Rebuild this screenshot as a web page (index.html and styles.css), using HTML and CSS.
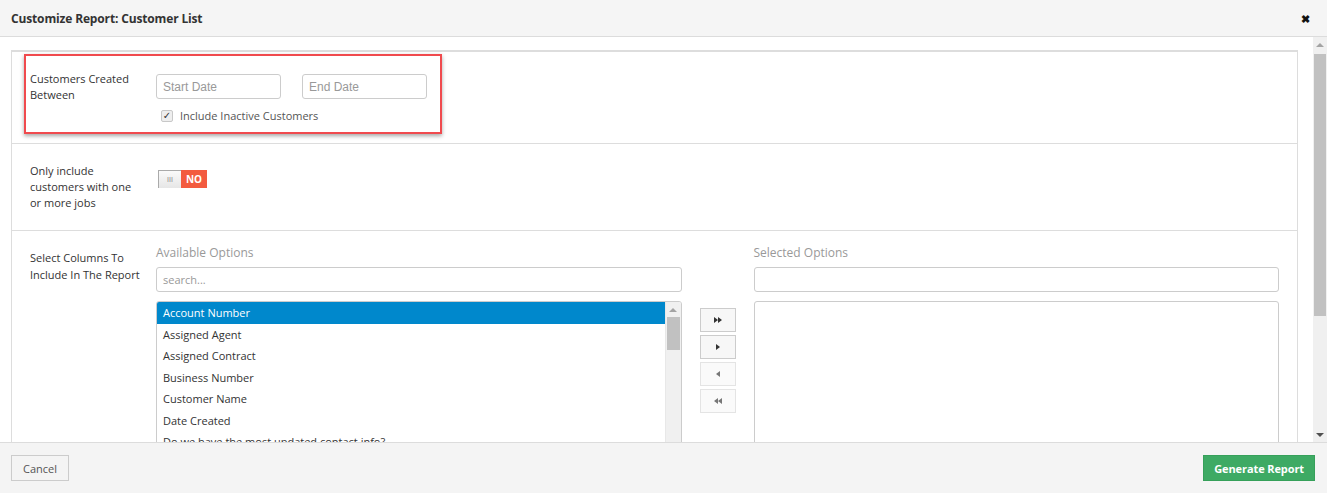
FILE: index.html
```html
<!DOCTYPE html>
<html lang="en">
<head>
    <meta charset="UTF-8">
    <meta name="viewport" content="width=device-width, initial-scale=1.0">
    <title>Customize Report</title>
    <link rel="stylesheet" href="styles.css">
</head>
<body>
<div class="modal">
    <div class="modal-header">
        <span class="modal-title">Customize Report: Customer List</span>
        <span class="close-btn">&#10006;</span>
    </div>

    <div class="modal-body">
        <div class="body-content">
            <div class="panel">
                <div class="highlight-box"></div>

                <div class="row row-dates">
                    <div class="row-label">Customers Created Between</div>
                    <div class="row-fields">
                        <div class="date-inputs">
                            <input type="text" class="date-input" placeholder="Start Date">
                            <input type="text" class="date-input" placeholder="End Date">
                        </div>
                        <label class="check-row">
                            <span class="fake-check">&#10003;</span>
                            Include Inactive Customers
                        </label>
                    </div>
                </div>

                <div class="row row-jobs">
                    <div class="row-label">Only include customers with one or more jobs</div>
                    <div class="row-fields">
                        <div class="toggle">
                            <span class="toggle-handle">III</span>
                            <span class="toggle-no">NO</span>
                        </div>
                    </div>
                </div>

                <div class="row row-columns">
                    <div class="row-label label-columns">Select Columns To Include In The Report</div>
                    <div class="picker">
                        <div class="picker-col">
                            <div class="picker-title">Available Options</div>
                            <input type="text" class="picker-search" placeholder="search...">
                            <div class="listbox">
                                <div class="list-items">
                                    <div class="list-item is-selected">Account Number</div>
                                    <div class="list-item">Assigned Agent</div>
                                    <div class="list-item">Assigned Contract</div>
                                    <div class="list-item">Business Number</div>
                                    <div class="list-item">Customer Name</div>
                                    <div class="list-item">Date Created</div>
                                    <div class="list-item">Do we have the most updated contact info?</div>
                                    <div class="list-item">Email</div>
                                    <div class="list-item">Fax Number</div>
                                    <div class="list-item">First Name</div>
                                    <div class="list-item">Last Name</div>
                                    <div class="list-item">Mobile Number</div>
                                </div>
                                <div class="scrollbar list-scrollbar">
                                    <div class="scroll-arrow arrow-up"></div>
                                    <div class="scroll-track">
                                        <div class="scroll-thumb list-thumb"></div>
                                    </div>
                                    <div class="scroll-arrow arrow-down"></div>
                                </div>
                            </div>
                        </div>

                        <div class="move-buttons">
                            <button class="move-btn">
                                <svg width="8" height="6" viewBox="0 0 8 6"><path d="M0 0 L4 3 L0 6 Z M4 0 L8 3 L4 6 Z" fill="#333"/></svg>
                            </button>
                            <button class="move-btn">
                                <svg width="4" height="6" viewBox="0 0 4 6"><path d="M0 0 L4 3 L0 6 Z" fill="#333"/></svg>
                            </button>
                            <button class="move-btn is-disabled">
                                <svg width="4" height="6" viewBox="0 0 4 6"><path d="M4 0 L0 3 L4 6 Z" fill="#777"/></svg>
                            </button>
                            <button class="move-btn is-disabled">
                                <svg width="8" height="6" viewBox="0 0 8 6"><path d="M4 0 L0 3 L4 6 Z M8 0 L4 3 L8 6 Z" fill="#777"/></svg>
                            </button>
                        </div>

                        <div class="picker-col">
                            <div class="picker-title">Selected Options</div>
                            <input type="text" class="picker-search">
                            <div class="listbox"></div>
                        </div>
                    </div>
                </div>
            </div>
        </div>

        <div class="scrollbar body-scrollbar">
            <div class="scroll-arrow arrow-up"></div>
            <div class="scroll-track">
                <div class="scroll-thumb body-thumb"></div>
            </div>
            <div class="scroll-arrow arrow-down"></div>
        </div>
    </div>

    <div class="modal-footer">
        <button class="btn-cancel">Cancel</button>
        <button class="btn-generate">Generate Report</button>
    </div>
</div>
</body>
</html>
```

FILE: styles.css
```css
*{
    box-sizing: border-box;
}

body{
    margin: 0;
    font-family: "Open Sans", Arial, sans-serif;
    font-size: 11px;
    color: #333;
    background-color: white;
}

.modal{
    display: flex;
    flex-direction: column;
    height: 493px;
}

.modal-header{
    height: 37px;
    display: flex;
    align-items: center;
    justify-content: space-between;
    padding: 0 17px 0 11px;
    background-color: #f5f5f5;
    border-bottom: 1px solid #dcdcdc;
}

.modal-title{
    font-weight: bold;
    font-size: 12px;
    letter-spacing: -0.15px;
    color: #333;
}

.close-btn{
    font-size: 11px;
    font-weight: bold;
    color: #111;
}

.modal-body{
    flex: 1;
    display: flex;
    overflow: hidden;
}

.body-content{
    flex: 1;
    overflow: hidden;
    padding: 13px 15px 0 11px;
}

/* hand-drawn scrollbars */
.scrollbar{
    display: flex;
    flex-direction: column;
    background-color: #f0f0f0;
}

.body-scrollbar{
    width: 14px;
}

.list-scrollbar{
    width: 16px;
    border-left: 1px solid #e8e8e8;
}

.scroll-arrow{
    height: 15px;
    display: flex;
    align-items: center;
    justify-content: center;
}

.arrow-up::before{
    content: "";
    border-left: 4px solid transparent;
    border-right: 4px solid transparent;
    border-bottom: 4px solid #a3a3a3;
}

.arrow-down::before{
    content: "";
    border-left: 4px solid transparent;
    border-right: 4px solid transparent;
    border-top: 4px solid #505050;
}

.scroll-track{
    flex: 1;
    padding: 0 1px;
}

.scroll-thumb{
    background-color: #c1c1c1;
}

.body-thumb{
    height: 262px;
    margin-top: 2px;
}

.list-thumb{
    height: 33px;
}

.panel{
    position: relative;
    border: 1px solid #dddddd;
    border-top: 2px solid #dddddd;
}

.highlight-box{
    position: absolute;
    left: 12px;
    top: 2px;
    width: 418px;
    height: 80px;
    border: 2px solid #f04a4e;
    box-shadow: 0 2px 4px rgba(0, 0, 0, 0.35);
    pointer-events: none;
}

.row{
    display: grid;
    grid-template-columns: 126px 1fr;
    padding: 19px 18px 0 18px;
    border-bottom: 1px solid #dddddd;
}

.row-label{
    line-height: 16px;
    color: #333;
    padding-right: 12px;
}

.row-dates{
    height: 92px;
}

.row-jobs{
    height: 87px;
}

.row-columns{
    border-bottom: none;
    padding-top: 13px;
    padding-bottom: 20px;
}

.label-columns{
    padding-top: 5px;
    line-height: 17px;
}

.date-inputs{
    display: flex;
    gap: 21px;
    margin-top: 3px;
}

.date-input{
    width: 125px;
    height: 25px;
    border: 1px solid #cccccc;
    border-radius: 3px;
    padding: 0 6px;
    font-family: "Liberation Sans", Arial, sans-serif;
    font-size: 12px;
}

.date-input::placeholder,
.picker-search::placeholder{
    color: #999;
}

.check-row{
    display: flex;
    align-items: center;
    gap: 7px;
    margin-top: 9px;
    margin-left: 5px;
    color: #555;
}

.fake-check{
    width: 12px;
    height: 12px;
    border: 1px solid #c8c8c8;
    border-radius: 2px;
    background-color: #eeeeee;
    font-size: 10px;
    font-weight: bold;
    line-height: 10px;
    text-align: center;
    color: #333;
    font-family: "DejaVu Sans", sans-serif;
}

.toggle{
    display: flex;
    margin-top: 7px;
    margin-left: 2px;
    height: 18px;
}

.toggle-handle{
    width: 23px;
    border: 1px solid #aaaaaa;
    border-right: none;
    border-bottom: none;
    background: linear-gradient(#fafafa, #e6e6e6);
    font-size: 7px;
    color: #888;
    text-align: center;
    line-height: 17px;
    font-family: "Liberation Sans", Arial, sans-serif;
}

.toggle-no{
    width: 26px;
    background-color: #f35b3f;
    color: white;
    font-weight: bold;
    font-size: 10px;
    text-align: center;
    line-height: 18px;
}

.picker{
    display: grid;
    grid-template-columns: 1fr 36px 1fr;
    gap: 18px;
}

.picker-title{
    font-size: 12px;
    line-height: 18px;
    color: #999;
}

.picker-search{
    display: block;
    width: 100%;
    height: 25px;
    margin-top: 5px;
    border: 1px solid #cccccc;
    border-radius: 3px;
    padding: 0 6px;
    font-family: "Open Sans", Arial, sans-serif;
    font-size: 11px;
}

.listbox{
    display: flex;
    margin-top: 9px;
    height: 255px;
    border: 1px solid #cccccc;
    border-radius: 3px;
    overflow: hidden;
    background-color: white;
}

.list-items{
    flex: 1;
    overflow: hidden;
}

.list-item{
    height: 21.5px;
    line-height: 21px;
    padding-left: 6px;
    white-space: nowrap;
    color: #333;
}

.is-selected{
    background-color: #0088cc;
    color: white;
}

.move-buttons{
    display: flex;
    flex-direction: column;
    gap: 3px;
    padding-top: 64px;
}

.move-btn{
    width: 36px;
    height: 24px;
    border: 1px solid #cccccc;
    background-color: #f7f7f7;
    display: flex;
    align-items: center;
    justify-content: center;
    padding: 0;
}

.move-btn.is-disabled{
    border-color: #e4e4e4;
    background-color: #fafafa;
}

.modal-footer{
    height: 51px;
    display: flex;
    align-items: center;
    justify-content: space-between;
    padding: 0 12px 0 11px;
    background-color: #f4f4f4;
    border-top: 1px solid #dcdcdc;
}

.btn-cancel{
    height: 26px;
    padding: 0 11px;
    border: 1px solid #cccccc;
    background-color: #f4f4f4;
    color: #555;
    font-family: "Open Sans", Arial, sans-serif;
    font-size: 11px;
}

.btn-generate{
    height: 26px;
    padding: 0 10px;
    border: 1px solid #36a05a;
    background-color: #3eaa64;
    color: white;
    font-weight: bold;
    font-family: "Open Sans", Arial, sans-serif;
    font-size: 11px;
    letter-spacing: -0.1px;
}
```
